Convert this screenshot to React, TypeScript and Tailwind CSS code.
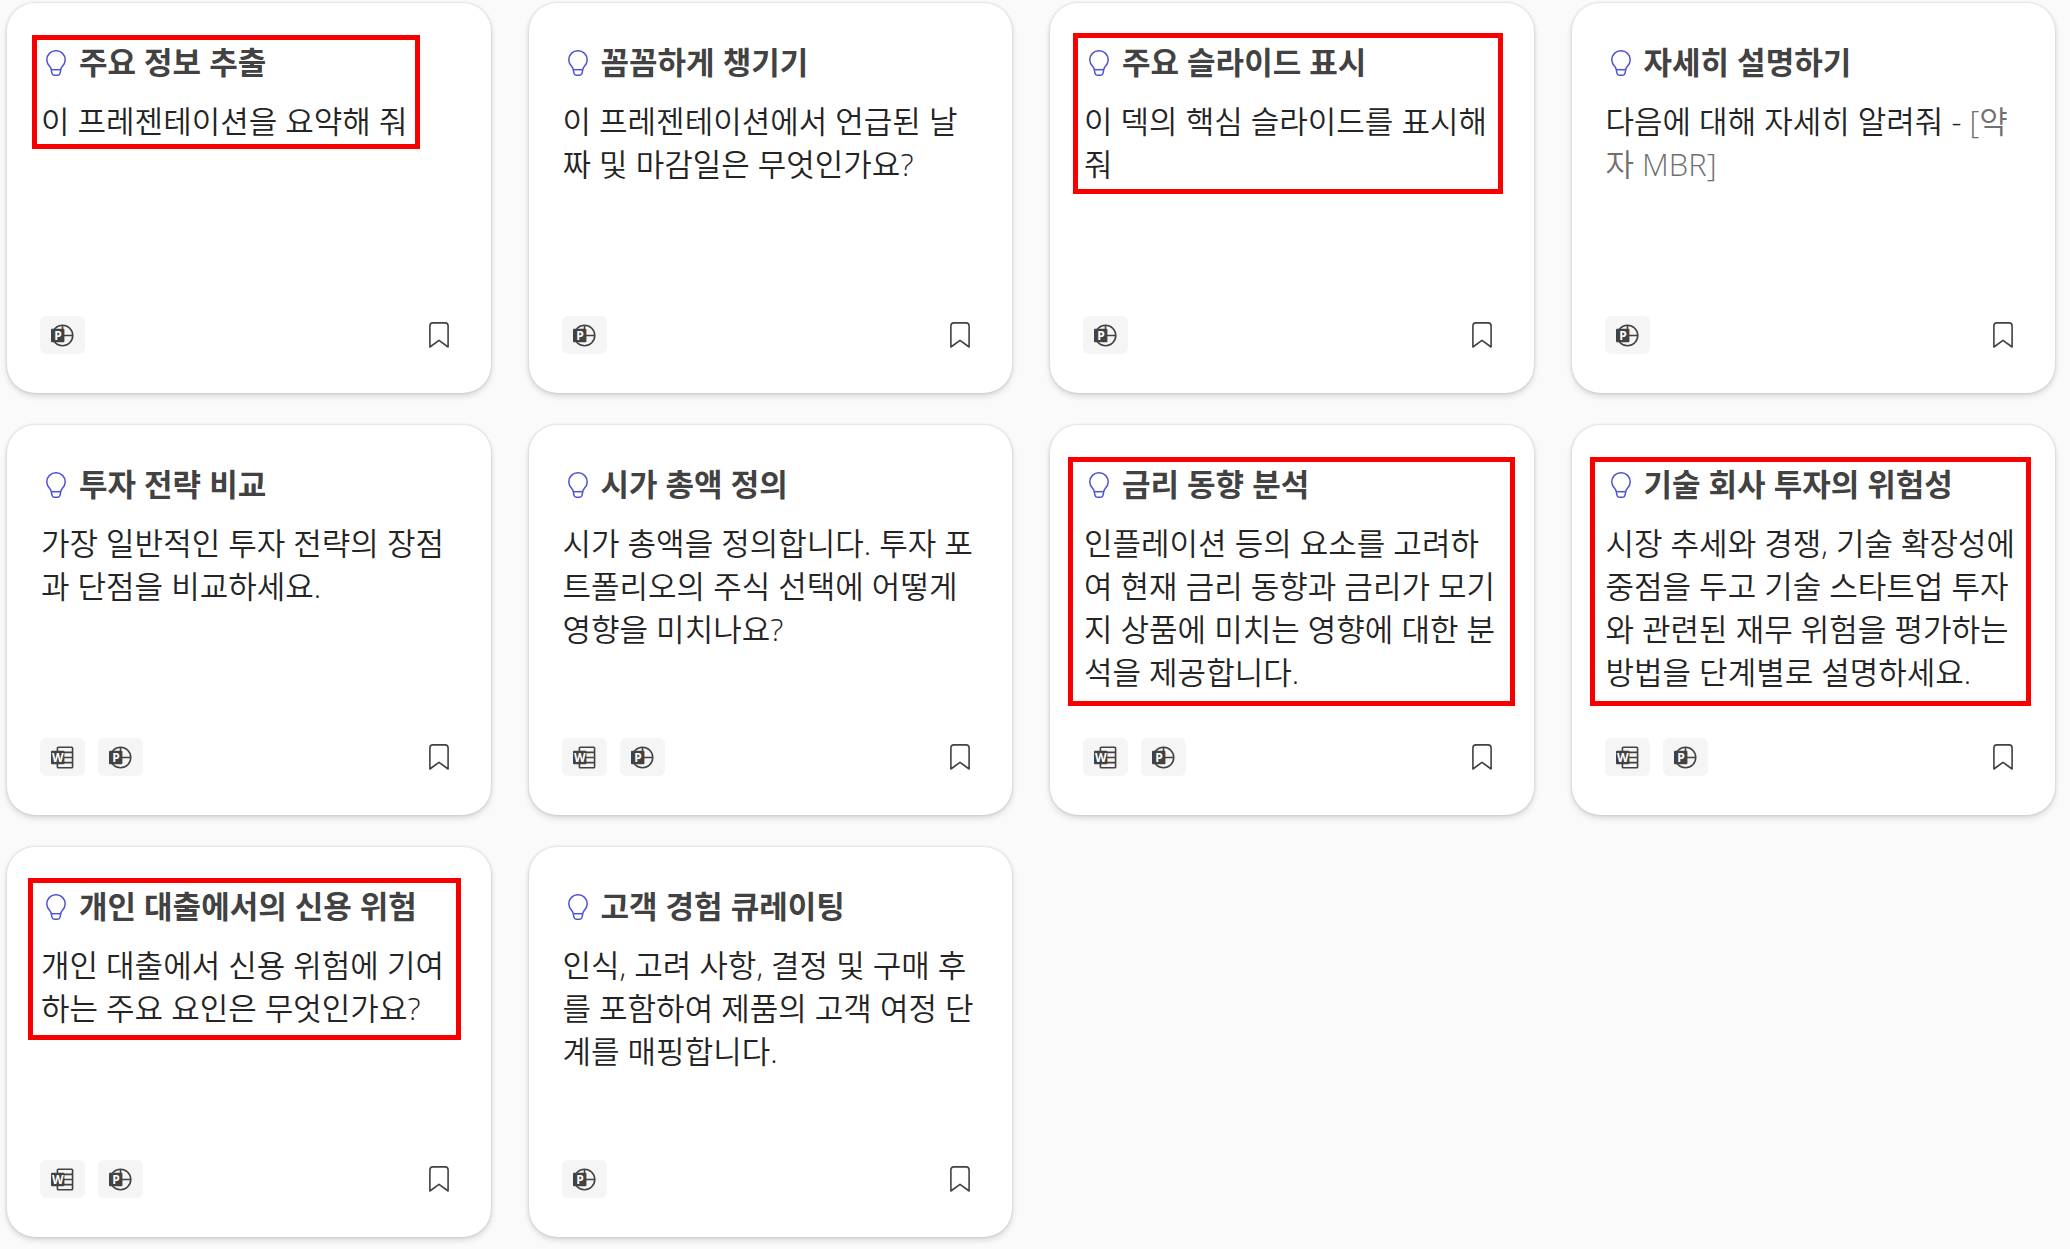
import React, { useState } from 'react';
import { clsx } from 'clsx';

type AppName = 'word' | 'powerpoint';

interface Prompt {
    title: string;
    text: string;
    placeholder?: string;
    apps: AppName[];
    highlight?: string;
}

const prompts: Prompt[] = [
    {
        title: '주요 정보 추출',
        text: '이 프레젠테이션을 요약해 줘',
        apps: ['powerpoint'],
        highlight: 'left-[25px] top-[32px] w-[388px] h-[114px]',
    },
    {
        title: '꼼꼼하게 챙기기',
        text: '이 프레젠테이션에서 언급된 날짜 및 마감일은 무엇인가요?',
        apps: ['powerpoint'],
    },
    {
        title: '주요 슬라이드 표시',
        text: '이 덱의 핵심 슬라이드를 표시해 줘',
        apps: ['powerpoint'],
        highlight: 'left-[23px] top-[30px] w-[430px] h-[161px]',
    },
    {
        title: '자세히 설명하기',
        text: '다음에 대해 자세히 알려줘 - ',
        placeholder: '[약자 MBR]',
        apps: ['powerpoint'],
    },
    {
        title: '투자 전략 비교',
        text: '가장 일반적인 투자 전략의 장점과 단점을 비교하세요.',
        apps: ['word', 'powerpoint'],
    },
    {
        title: '시가 총액 정의',
        text: '시가 총액을 정의합니다. 투자 포트폴리오의 주식 선택에 어떻게 영향을 미치나요?',
        apps: ['word', 'powerpoint'],
    },
    {
        title: '금리 동향 분석',
        text: '인플레이션 등의 요소를 고려하여 현재 금리 동향과 금리가 모기지 상품에 미치는 영향에 대한 분석을 제공합니다.',
        apps: ['word', 'powerpoint'],
        highlight: 'left-[18px] top-[32px] w-[447px] h-[249px]',
    },
    {
        title: '기술 회사 투자의 위험성',
        text: '시장 추세와 경쟁, 기술 확장성에 중점을 두고 기술 스타트업 투자와 관련된 재무 위험을 평가하는 방법을 단계별로 설명하세요.',
        apps: ['word', 'powerpoint'],
        highlight: 'left-[18px] top-[32px] w-[441px] h-[249px]',
    },
    {
        title: '개인 대출에서의 신용 위험',
        text: '개인 대출에서 신용 위험에 기여하는 주요 요인은 무엇인가요?',
        apps: ['word', 'powerpoint'],
        highlight: 'left-[21px] top-[31px] w-[433px] h-[162px]',
    },
    {
        title: '고객 경험 큐레이팅',
        text: '인식, 고려 사항, 결정 및 구매 후를 포함하여 제품의 고객 여정 단계를 매핑합니다.',
        apps: ['powerpoint'],
    },
];

function BulbIcon() {
    return (
        <svg className="w-5 h-[26px] shrink-0" viewBox="0 0 20 26" fill="none" stroke="#4f52d3" strokeWidth="1.5" strokeLinejoin="round" aria-hidden="true">
            <path d="M10 .8a9 9 0 0 1 9.2 9.1c0 2.8-1.3 5-3.3 7.1-.5.6-.7 1-.9 1.7l-1 4.6a2.4 2.4 0 0 1-2.3 1.9H8.3a2.4 2.4 0 0 1-2.3-1.9l-1-4.6c-.2-.7-.4-1.1-.9-1.7C2.100 14.900.8 12.700.8 9.900A9 9 0 0 1 10 .8Z" />
            <path d="M5.200 19.700h9.600" />
        </svg>
    );
}

function BookmarkIcon() {
    return (
        <svg className="w-5 h-[26px]" viewBox="0 0 20 26" fill="none" stroke="#424242" strokeWidth="1.6" strokeLinejoin="round" aria-hidden="true">
            <path d="M.9 25V3.900A3 3 0 0 1 3.900.9h12.200a3 3 0 0 1 3 3V25L10 18.300Z" />
        </svg>
    );
}

function WordIcon() {
    return (
        <svg className="w-[23px] h-[23px]" viewBox="0 0 24 24" fill="none" stroke="#424242" strokeWidth="1.700" aria-hidden="true">
            <path d="M6.700 5.500V2.200q0-.9.9-.9h14q.9 0 .9.9v19.600q0 .9-.9.9h-14q-.9 0-.9-.9v-3.300M13 6.600h9.500M13 12h9.500M13 17.400h9.500" />
            <rect x="0" y="5" width="14" height="14" rx="1" fill="#424242" stroke="none" />
            <text x="7" y="16.500" textAnchor="middle" fontSize="12.500" fontWeight="700" fontFamily="Open Sans, sans-serif" fill="#fff" stroke="none">W</text>
        </svg>
    );
}

function PowerPointIcon() {
    return (
        <svg className="w-[23px] h-[23px]" viewBox="0 0 24 24" fill="none" stroke="#424242" strokeWidth="1.700" aria-hidden="true">
            <circle cx="12" cy="12" r="10.700" />
            <path d="M12 1.300V12h10.700" />
            <rect x="0" y="5" width="14" height="14" rx="1" fill="#424242" stroke="none" />
            <text x="7.300" y="16.500" textAnchor="middle" fontSize="12.500" fontWeight="700" fontFamily="Open Sans, sans-serif" fill="#fff" stroke="none">P</text>
        </svg>
    );
}

function PromptCard({ title, text, placeholder, apps, highlight }: Prompt) {
    const [saved, setSaved] = useState(false);

    return (
        <article className="relative flex flex-col min-h-[390px] rounded-[28px] bg-white pt-[38px] pb-[39px] px-[33px] shadow-[0_0_3px_rgba(0,0,0,0.16),0_3px_6px_rgba(0,0,0,0.14)]">
            <h2 className="flex items-center gap-[13px] pl-[6px] text-[31px] leading-[43px] font-bold text-[#424242]">
                <BulbIcon />
                {title}
            </h2>
            <p className="mt-4 pl-px text-[31px] leading-[43px] font-[350] text-[#242424]">
                {text}
                {placeholder && <span className="text-[#707070]">{placeholder}</span>}
            </p>
            <div className="mt-auto flex items-center justify-between">
                <div className="flex gap-[13px]">
                    {apps.map(app => (
                        <span key={app} className="flex items-center justify-center w-[45px] h-[38px] rounded-md bg-[#f5f5f5]">
                            {app === 'word' ? <WordIcon /> : <PowerPointIcon />}
                        </span>
                    ))}
                </div>
                <button
                    type="button"
                    aria-label="저장"
                    aria-pressed={saved}
                    onClick={() => setSaved(!saved)}
                    className="px-[9px] cursor-pointer"
                >
                    <BookmarkIcon />
                </button>
            </div>
            {highlight && <div className={clsx('absolute border-[5px] border-[#f80000] pointer-events-none', highlight)} />}
        </article>
    );
}

export default function App() {
    return (
        <main className="min-h-screen bg-[#fafafa] pt-[3px] pb-2 pl-[7px] pr-[15px] font-['Open_Sans','Noto_Sans_CJK_KR',sans-serif]">
            <div className="grid grid-cols-4 gap-x-[38px] gap-y-8">
                {prompts.map(prompt => (
                    <PromptCard key={prompt.title} {...prompt} />
                ))}
            </div>
        </main>
    );
}
